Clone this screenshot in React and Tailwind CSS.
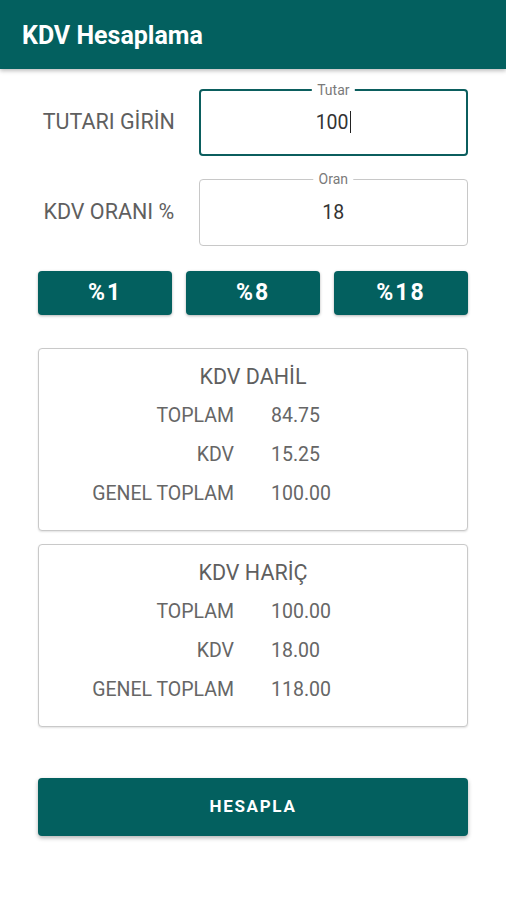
import React from "react";

function Field({ label, legend, value, focused }) {
  return (
    <div className="flex items-center">
      <div className="w-[142px] whitespace-nowrap text-center text-[21.5px] text-[#5f5f5f]">{label}</div>
      <div
        className={
          "relative ml-[19px] flex h-[67px] w-[270px] items-center justify-center rounded-[4px] " +
          (focused ? "border-2 border-[#0b5e5e]" : "border border-[#c8c8c8]")
        }
      >
        <span className="absolute left-1/2 top-[-10px] -translate-x-1/2 bg-white px-[5px] text-[14px] leading-[18px] text-[#7a7a7a]">
          {legend}
        </span>
        <span className="text-[19.5px] text-[#333]">
          {value}
          {focused && <span className="ml-[1px] inline-block h-[22px] w-[1.5px] translate-y-[4px] bg-[#222]" />}
        </span>
      </div>
    </div>
  );
}

function Card({ title, rows }) {
  return (
    <div className="flex h-[183px] flex-col rounded-[4px] border border-[#c9c9c9] bg-white pt-[14px] shadow-[0_1px_2px_rgba(0,0,0,0.12)]">
      <div className="text-center text-[21.5px] leading-[28px] text-[#5f5f5f]">{title}</div>
      <div className="mt-[12px] grid grid-cols-2 gap-y-[13px]">
        {rows.map(([k, v]) => (
          <React.Fragment key={k}>
            <div className="whitespace-nowrap pr-[19px] text-right text-[19.5px] leading-[26px] text-[#666]">{k}</div>
            <div className="pl-[18px] text-[19.5px] leading-[26px] text-[#666]">{v}</div>
          </React.Fragment>
        ))}
      </div>
    </div>
  );
}

export default function App() {
  return (
    <div className="min-h-[900px] bg-white font-['Roboto',sans-serif]">
      <div className="flex h-[69px] items-center bg-[#03605f] px-[22px] pt-[3px] shadow-[0_2px_4px_rgba(0,0,0,0.25)]">
        <h1 className="text-[25px] font-bold text-white">KDV Hesaplama</h1>
      </div>
      <div className="px-[38px] pt-[20px]">
        <Field label="TUTARI GİRİN" legend="Tutar" value="100" focused />
        <div className="mt-[23px]">
          <Field label="KDV ORANI %" legend="Oran" value="18" />
        </div>
        <div className="mt-[25px] grid grid-cols-3 gap-[14px]">
          {["%1", "%8", "%18"].map((t) => (
            <button
              key={t}
              className="flex h-[44px] items-center justify-center rounded-[4px] bg-[#03605f] text-[23px] font-bold tracking-[2px] text-white shadow-[0_1px_3px_rgba(0,0,0,0.3)]"
            >
              {t}
            </button>
          ))}
        </div>
        <div className="mt-[33px]">
          <Card
            title="KDV DAHİL"
            rows={[
              ["TOPLAM", "84.75"],
              ["KDV", "15.25"],
              ["GENEL TOPLAM", "100.00"],
            ]}
          />
        </div>
        <div className="mt-[13px]">
          <Card
            title="KDV HARİÇ"
            rows={[
              ["TOPLAM", "100.00"],
              ["KDV", "18.00"],
              ["GENEL TOPLAM", "118.00"],
            ]}
          />
        </div>
        <button className="mt-[51px] flex h-[58px] w-full items-center justify-center rounded-[4px] bg-[#03605f] text-[17px] font-bold tracking-[1.7px] text-white shadow-[0_2px_4px_rgba(0,0,0,0.3)]">
          HESAPLA
        </button>
      </div>
    </div>
  );
}
